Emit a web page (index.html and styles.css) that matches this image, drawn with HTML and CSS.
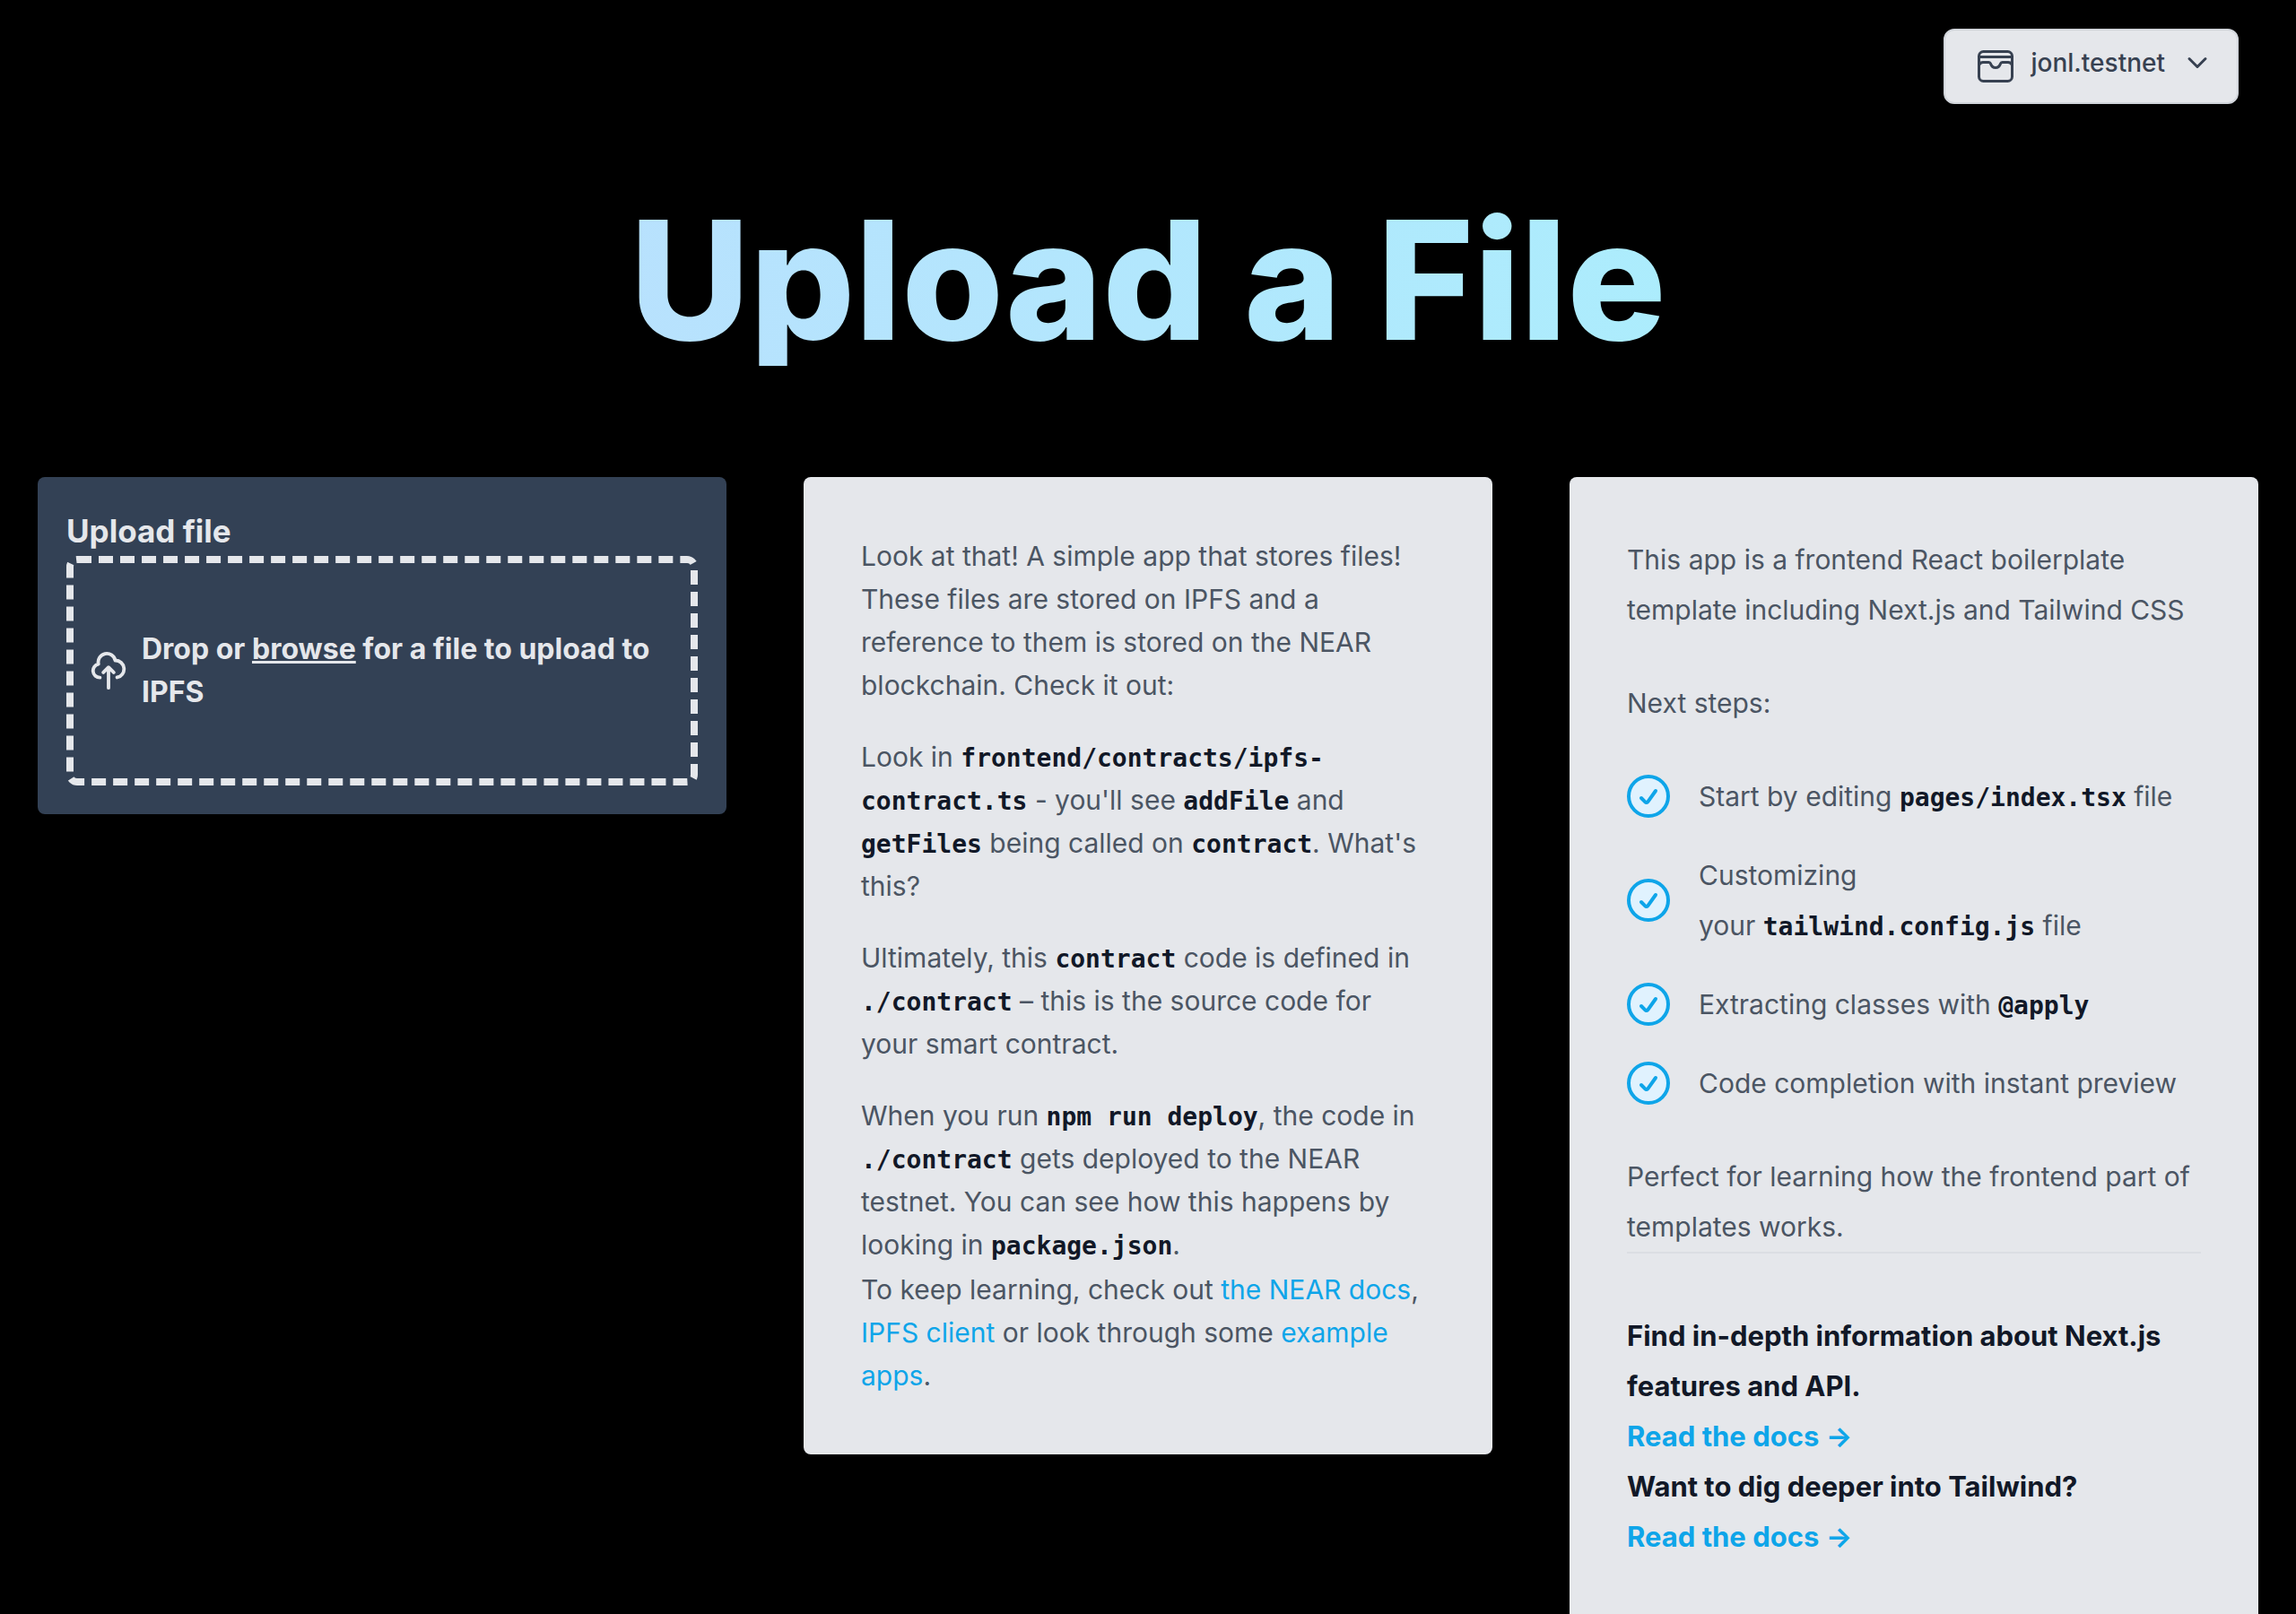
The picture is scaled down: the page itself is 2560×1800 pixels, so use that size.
FILE: index.html
```html
<!DOCTYPE html>
<html lang="en">
<head>
<meta charset="utf-8">
<meta name="viewport" content="width=device-width, initial-scale=1">
<title>Upload a File</title>
<link rel="stylesheet" href="styles.css">
</head>
<body>
<header class="topbar">
  <button class="account" type="button" aria-haspopup="true">
    <svg class="account-icon" viewBox="0 0 48 48" aria-hidden="true">
      <rect x="5.5" y="7.5" width="37" height="33" rx="5"/>
      <path d="M6 13.5h36M6 22q1-2.500 4-2.500h6.500q1.500 0 2 1.500 1.500 4.500 5.500 4.500t5.500-4.500q.5-1.500 2-1.500H38q3 0 4 2.500"/>
    </svg>
    <span>jonl.testnet</span>
    <svg class="account-chevron" viewBox="0 0 40 40" aria-hidden="true"><path d="M11 15.500l9 9 9-9"/></svg>
  </button>
</header>

<main>
  <h1 class="title">Upload a File</h1>

  <div class="columns">
    <section class="card upload">
      <h2 class="upload-title">Upload file</h2>
      <label class="dropzone">
        <input class="dropzone-input" type="file">
        <svg class="dropzone-icon" viewBox="0 0 24 24" aria-hidden="true"><path d="M7 16a4 4 0 01-.88-7.903A5 5 0 1115.900 6L16 6a5 5 0 011 9.900M15 13l-3-3m0 0l-3 3m3-3v12"/></svg>
        <span>Drop or <span class="browse">browse</span> for a file to upload to IPFS</span>
      </label>
    </section>

    <section class="card about">
      <p>Look at that! A simple app that stores files! These files are stored on IPFS and a reference to them is stored on the NEAR blockchain. Check it out:</p>
      <p>Look in <code>frontend/contracts/ipfs-contract.ts</code> - you'll see <code>addFile</code> and <code>getFiles</code> being called on <code>contract</code>. What's this?</p>
      <p>Ultimately, this <code>contract</code> code is defined in <code>./contract</code> – this is the source code for your smart contract.</p>
      <p>When you run <code>npm run deploy</code>, the code in <code>./contract</code> gets deployed to the NEAR testnet. You can see how this happens by looking in <code>package.json</code>.</p>
      <p class="more">To keep learning, check out <a href="#near">the NEAR docs</a>, <a href="#ipfs">IPFS client</a> or look through some <a href="#examples">example apps</a>.</p>
    </section>

    <section class="card guide">
      <div class="guide-body">
        <p>This app is a frontend React boilerplate template including Next.js and Tailwind CSS</p>
        <p>Next steps:</p>
        <ul class="steps">
          <li><svg class="check" viewBox="0 0 24 24" aria-hidden="true"><circle cx="12" cy="12" r="11"/><path d="m8 13 2.165 2.165a1 1 0 0 0 1.521-.126L16 9"/></svg><span>Start by editing <code>pages/index.tsx</code> file</span></li>
          <li><svg class="check" viewBox="0 0 24 24" aria-hidden="true"><circle cx="12" cy="12" r="11"/><path d="m8 13 2.165 2.165a1 1 0 0 0 1.521-.126L16 9"/></svg><span>Customizing your&nbsp;<code>tailwind.config.js</code> file</span></li>
          <li><svg class="check" viewBox="0 0 24 24" aria-hidden="true"><circle cx="12" cy="12" r="11"/><path d="m8 13 2.165 2.165a1 1 0 0 0 1.521-.126L16 9"/></svg><span>Extracting classes with <code>@apply</code></span></li>
          <li><svg class="check" viewBox="0 0 24 24" aria-hidden="true"><circle cx="12" cy="12" r="11"/><path d="m8 13 2.165 2.165a1 1 0 0 0 1.521-.126L16 9"/></svg><span>Code completion with instant preview</span></li>
        </ul>
        <p>Perfect for learning how the frontend part of templates works.</p>
      </div>
      <div class="guide-links">
        <p>Find in-depth information about Next.js features and API.</p>
        <p><a href="#next">Read the docs →</a></p>
        <p>Want to dig deeper into Tailwind?</p>
        <p><a href="#tailwind">Read the docs →</a></p>
      </div>
    </section>
  </div>
</main>
</body>
</html>
```
FILE: styles.css
```css
* { box-sizing: border-box; }

body {
  margin: 0;
  background: #000;
  color: #4b5563;
  font: 400 30px/48px Inter, "Liberation Sans", sans-serif;
}

h1, h2, p, ul { margin: 0; padding: 0; }

a { color: #0ea5e9; text-decoration: none; }

code {
  color: #111827;
  font: 700 28px/28px "DejaVu Sans Mono", monospace;
}

/* Account menu */
.topbar {
  display: flex;
  justify-content: flex-end;
  padding: 32px 64px 0;
}

.account {
  display: flex;
  align-items: flex-start;
  gap: 16px;
  padding: 16px 32px;
  border: 2px solid #d1d5db;
  border-radius: 12px;
  background: #e5e7eb;
  color: #374151;
  font: 500 28px/40px Inter, "Liberation Sans", sans-serif;
}

.account svg {
  fill: none;
  stroke: currentColor;
  stroke-width: 3;
  stroke-linecap: round;
  stroke-linejoin: round;
}

.account-icon { width: 48px; height: 48px; }
.account-chevron { width: 40px; height: 40px; margin-right: -8px; }

/* Page title */
.title {
  margin: 100px 0 124px;
  background: linear-gradient(to right, #bfdbfe, #a5f3fc);
  -webkit-background-clip: text;
  background-clip: text;
  color: transparent;
  font-size: 184px;
  font-weight: 800;
  line-height: 192px;
  text-align: center;
}

/* Cards */
.columns {
  display: grid;
  grid-template-columns: repeat(3, 1fr);
  align-items: start;
  gap: 86px;
  padding: 0 42px;
}

.card {
  border-radius: 8px;
  background: #e5e7eb;
}

.upload {
  padding: 32px;
  background: #334155;
  color: #e5e7eb;
}

.upload-title { font-size: 35px; font-weight: 700; line-height: 56px; }

.dropzone {
  display: flex;
  align-items: center;
  gap: 14px;
  height: 256px;
  padding: 0 16px;
  border: 8px dashed #e5e7eb;
  border-radius: 12px;
  font-size: 32px;
  font-weight: 700;
}

.dropzone-input {
  position: absolute;
  width: 1px;
  height: 1px;
  opacity: 0;
}

.dropzone-icon {
  flex: none;
  width: 46px;
  height: 46px;
  fill: none;
  stroke: currentColor;
  stroke-width: 2;
  stroke-linecap: round;
  stroke-linejoin: round;
}

.browse { text-decoration: underline; }

.about { padding: 64px; }
.about p + p { margin-top: 32px; }
.about .more { margin-top: 2px; }

.guide { padding: 0 64px; line-height: 56px; }

.guide-body {
  display: grid;
  gap: 48px;
  padding-top: 64px;
  border-bottom: 2px solid #dbdee3;
}

.steps { display: grid; gap: 32px; list-style: none; }
.steps li { display: flex; align-items: center; gap: 32px; }

.check {
  flex: none;
  width: 48px;
  height: 48px;
  fill: none;
  stroke: #0ea5e9;
  stroke-width: 2;
  stroke-linecap: round;
}

.check circle { fill: #e0f2fe; }

.guide-links {
  padding: 64px 0 80px;
  color: #111827;
  font-size: 31px;
  font-weight: 700;
}
```
